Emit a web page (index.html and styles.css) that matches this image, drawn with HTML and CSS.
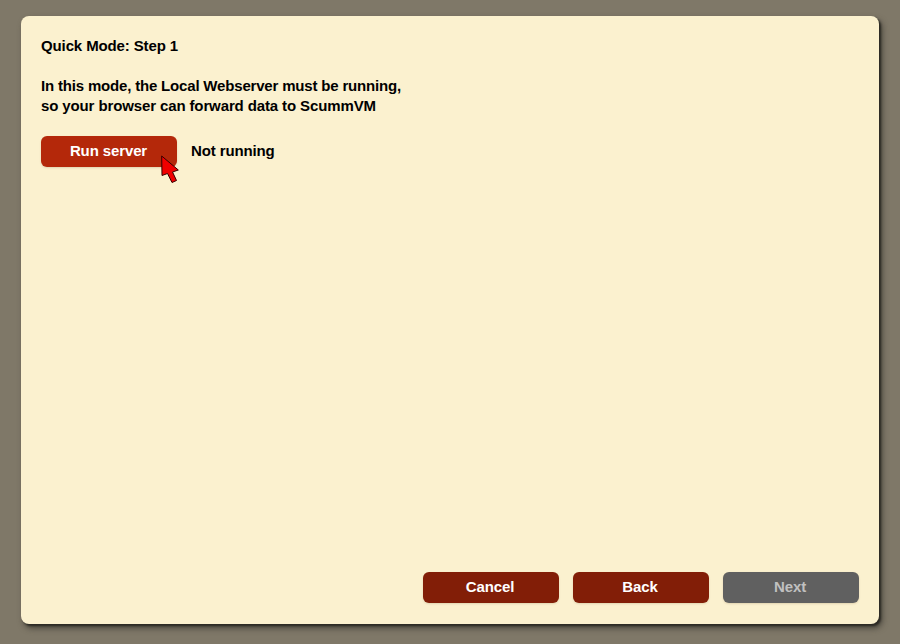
FILE: index.html
```html
<!DOCTYPE html>
<html lang="en">
<head>
<meta charset="utf-8">
<title>Quick Mode</title>
<link rel="stylesheet" href="styles.css">
</head>
<body>
<main class="dialog">
  <h1 class="title">Quick Mode: Step 1</h1>
  <p class="description"><span class="lead">In this mode, the Local Webserver must be running,</span><br>so your browser can forward data to ScummVM</p>
  <div class="server-row">
    <button class="button button-hover">Run server</button>
    <span class="status">Not running</span>
  </div>
  <footer class="actions">
    <button class="button">Cancel</button>
    <button class="button">Back</button>
    <button class="button" disabled>Next</button>
  </footer>
</main>
<svg class="cursor" width="20" height="30" viewBox="0 0 20 30"><path d="M1.7 2L2 21.5L7.5 19.5L12 28.5L16.5 26.5L12.5 18L18.3 16Z"/></svg>
</body>
</html>
```

FILE: styles.css
```css
* {
  box-sizing: border-box;
}

body {
  margin: 0;
  height: 644px;
  padding: 16px 21px 20px;
  background: #7f7868;
  font: bold 15px/20px "Liberation Sans", Arial, sans-serif;
  letter-spacing: -0.12px;
  color: #000;
  overflow: hidden;
}

.dialog {
  display: flex;
  flex-direction: column;
  height: 608px;
  padding: 20px 20px 21px;
  border-radius: 8px;
  background: #fbf1cf;
  box-shadow: 2px 2px 2px #2c2a24, 3px 4px 6px #2c2a24b0;
}

.title,
.description {
  margin: 0 0 20px;
  font: inherit;
}

.lead {
  letter-spacing: -0.18px;
}

.server-row {
  display: flex;
  align-items: flex-start;
  gap: 14px;
}

.status {
  padding-top: 5px;
}

.button {
  width: 136px;
  height: 31px;
  padding: 0 2px 1px 0;
  border: 0;
  border-radius: 6px;
  background: #821e07;
  color: #fff;
  font: inherit;
  letter-spacing: inherit;
  box-shadow: 0 1px 2px #6040202a;
}

.button-hover {
  padding-right: 1px;
  background: #b4280a;
}

.button:disabled {
  background: #606060;
  color: #c0c0c0;
}

.actions {
  display: flex;
  justify-content: flex-end;
  gap: 14px;
  margin-top: auto;
}

.cursor {
  position: absolute;
  left: 160px;
  top: 154px;
  fill: #f00000;
  stroke: #300;
}
```
